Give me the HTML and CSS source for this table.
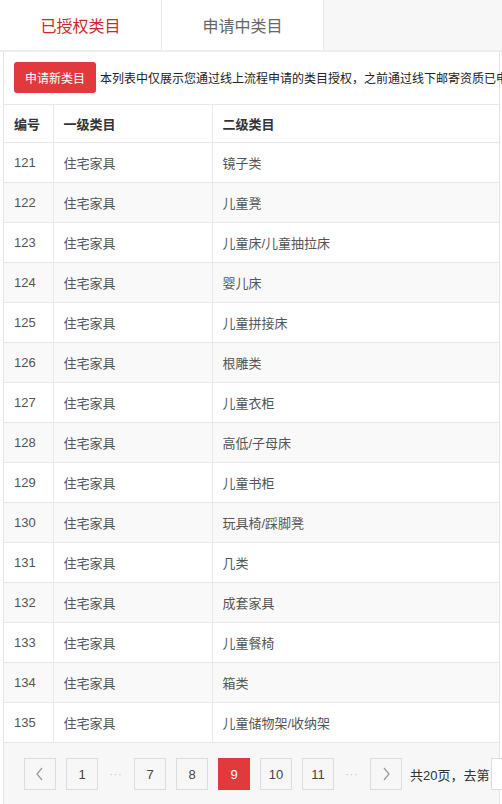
FILE: index.html
```html
<!DOCTYPE html>
<html lang="zh-CN">
<head>
<meta charset="utf-8">
<title>类目管理</title>
<link rel="stylesheet" href="styles.css">
</head>
<body>
<div class="page">
  <div class="tabs">
    <div class="tab active">已授权类目</div>
    <div class="tab">申请中类目</div>
  </div>
  <div class="panel">
    <div class="toolbar">
      <button class="btn-red">申请新类目</button>
      <span class="note">本列表中仅展示您通过线上流程申请的类目授权，之前通过线下邮寄资质已申请的类目授权请联系客服查询</span>
    </div>
    <table class="grid">
      <colgroup><col class="c1"><col class="c2"><col class="c3"></colgroup>
      <thead>
        <tr><th>编号</th><th>一级类目</th><th>二级类目</th></tr>
      </thead>
      <tbody>
        <tr><td>121</td><td>住宅家具</td><td>镜子类</td></tr>
        <tr><td>122</td><td>住宅家具</td><td>儿童凳</td></tr>
        <tr><td>123</td><td>住宅家具</td><td>儿童床/儿童抽拉床</td></tr>
        <tr><td>124</td><td>住宅家具</td><td>婴儿床</td></tr>
        <tr><td>125</td><td>住宅家具</td><td>儿童拼接床</td></tr>
        <tr><td>126</td><td>住宅家具</td><td>根雕类</td></tr>
        <tr><td>127</td><td>住宅家具</td><td>儿童衣柜</td></tr>
        <tr><td>128</td><td>住宅家具</td><td>高低/子母床</td></tr>
        <tr><td>129</td><td>住宅家具</td><td>儿童书柜</td></tr>
        <tr><td>130</td><td>住宅家具</td><td>玩具椅/踩脚凳</td></tr>
        <tr><td>131</td><td>住宅家具</td><td>几类</td></tr>
        <tr><td>132</td><td>住宅家具</td><td>成套家具</td></tr>
        <tr><td>133</td><td>住宅家具</td><td>儿童餐椅</td></tr>
        <tr><td>134</td><td>住宅家具</td><td>箱类</td></tr>
        <tr><td>135</td><td>住宅家具</td><td>儿童储物架/收纳架</td></tr>
      </tbody>
    </table>
    <div class="pager">
      <a class="pg arrow"><svg width="10" height="14" viewBox="0 0 10 14"><path d="M7 1 L2 7 L7 13" fill="none" stroke="#999" stroke-width="1.2"/></svg></a>
      <a class="pg">1</a>
      <span class="dots">···</span>
      <a class="pg">7</a>
      <a class="pg">8</a>
      <a class="pg cur">9</a>
      <a class="pg">10</a>
      <a class="pg">11</a>
      <span class="dots">···</span>
      <a class="pg arrow"><svg width="10" height="14" viewBox="0 0 10 14"><path d="M3 1 L8 7 L3 13" fill="none" stroke="#999" stroke-width="1.2"/></svg></a>
      <span class="total">共20页，去第</span>
      <input class="goto" type="text">
    </div>
  </div>
</div>
</body>
</html>
```

FILE: styles.css
```css
html, body {
  margin: 0;
  padding: 0;
  overflow: hidden;
  background: #fff;
}
body {
  font-family: "Liberation Sans", "Noto Sans CJK SC", sans-serif;
  color: #333;
}
.page {
  width: 640px;
}
.tabs {
  display: flex;
  height: 50px;
  background: #f7f7f7;
  border-bottom: 2px solid #ededed;
}
.tab {
  width: 161px;
  border-right: 1px solid #e8e8e8;
  background: #fff;
  display: flex;
  align-items: center;
  justify-content: center;
  font-size: 16px;
  color: #666;
}
.tab.active {
  color: #c8282e;
}
.panel {
  margin-left: 3px;
  border-left: 1px solid #e3e3e3;
  width: 495px;
  border-right: 1px solid #e3e3e3;
}
.toolbar {
  display: flex;
  align-items: center;
  gap: 4px;
  padding: 10px 0 11px 10px;
  white-space: nowrap;
}
.btn-red {
  height: 31px;
  width: 82px;
  border: none;
  border-radius: 3px;
  background: #e2393d;
  color: #fff;
  font-family: inherit;
  font-size: 12px;
  padding: 0;
  flex: none;
}
.note {
  font-size: 12px;
  color: #222;
}
.grid {
  width: 495px;
  border-collapse: collapse;
  table-layout: fixed;
  font-size: 13px;
}
.c1 { width: 49px; }
.c2 { width: 159px; }
.c3 { width: 287px; }
.grid th, .grid td {
  height: 39px;
  padding: 0 0 0 10px;
  text-align: left;
  border-top: 1px solid #e8e8e8;
  border-right: 1px solid #e8e8e8;
  white-space: nowrap;
}
.grid th {
  height: 37px;
  font-weight: bold;
  color: #333;
}
.grid th:last-child, .grid td:last-child {
  border-right: none;
}
.grid td {
  color: #555;
}
.grid tbody tr:nth-child(even) td {
  background: #f9f9f9;
}
.pager {
  display: flex;
  align-items: center;
  gap: 10px;
  padding: 15px 0 14px 20px;
  background: #f7f7f7;
  border-top: 1px solid #e8e8e8;
  white-space: nowrap;
}
.pager > * {
  flex: none;
}
.pg {
  box-sizing: border-box;
  width: 32px;
  height: 32px;
  border: 1px solid #dcdcdc;
  background: #f7f7f7;
  display: flex;
  align-items: center;
  justify-content: center;
  font-size: 13px;
  color: #444;
}
.pg.cur {
  background: #e2393d;
  border-color: #e2393d;
  color: #fff;
}
.dots {
  width: 16px;
  text-align: center;
  color: #bbb;
  font-size: 10px;
  letter-spacing: 1px;
}
.total {
  font-size: 13px;
  color: #333;
  margin-left: -2px;
}
.goto {
  box-sizing: border-box;
  width: 40px;
  height: 32px;
  border: 1px solid #dcdcdc;
  background: #fff;
  margin-left: -8px;
}
```
